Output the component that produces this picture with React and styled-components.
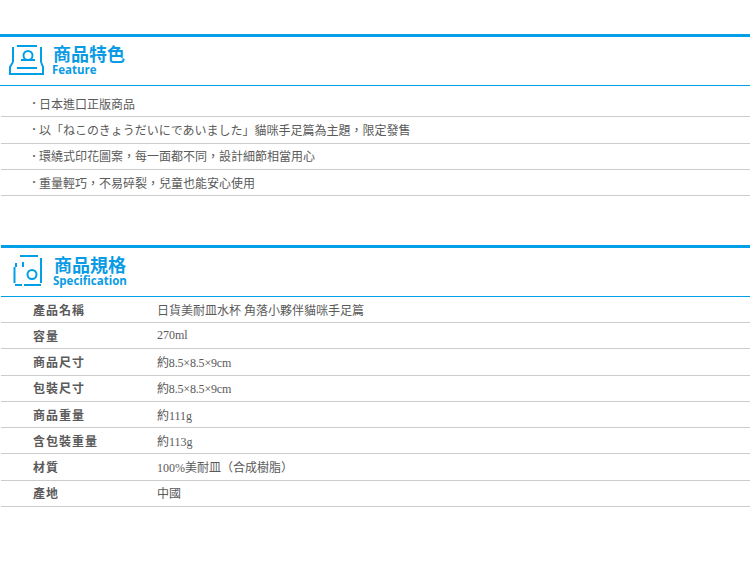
import React from 'react';
import styled, { createGlobalStyle } from 'styled-components';

const GlobalStyle = createGlobalStyle`
  html, body {
    margin: 0;
    padding: 0;
    background: #fff;
  }
`;

const Page = styled.div`
  width: 750px;
  height: 566px;
  padding-top: 34px;
  box-sizing: border-box;
  font-family: "Liberation Serif", "Noto Sans CJK TC", serif;
  font-size: 12px;
  color: #5a5a5a;
  overflow: hidden;
`;

const Section = styled.section`
  margin-bottom: ${(p) => p.$gap || 0}px;
`;

const Header = styled.div`
  box-sizing: border-box;
  height: 52px;
  margin-left: ${(p) => p.$inset || 0}px;
  border-top: 3px solid #009fe8;
  border-bottom: 1px solid #009fe8;
  display: flex;
  align-items: center;
  padding-left: 9px;
  padding-bottom: 2px;
  gap: 7px;
`;

const HeadText = styled.div`
  display: flex;
  flex-direction: column;
  color: #0a9be4;
`;

const HeadTitle = styled.div`
  margin-left: 1px;
  font-family: "Noto Sans CJK TC", sans-serif;
  font-size: 18px;
  font-weight: 700;
  line-height: 20px;
`;

const HeadSub = styled.div`
  font-family: "Open Sans", sans-serif;
  font-size: 11.5px;
  font-weight: 700;
  line-height: 14px;
`;

const List = styled.div`
  padding-top: 5px;
`;

const ListRow = styled.div`
  box-sizing: border-box;
  height: 26.33px;
  margin-left: 1px;
  border-bottom: 1px solid #ccc;
  display: flex;
  align-items: center;
  padding-left: 31px;
`;

const Bullet = styled.span`
  width: 7px;
  font-weight: 700;
`;

const SpecRow = styled.div`
  box-sizing: border-box;
  height: 26.25px;
  margin-left: 1px;
  border-bottom: 1px solid #ccc;
  display: flex;
  align-items: center;
  padding-left: 32px;
`;

const SpecLabel = styled.div`
  width: 124px;
  font-weight: 700;
  letter-spacing: 1px;
`;

const SpecValue = styled.span`
  letter-spacing: ${(p) => (p.$tight ? '-0.17px' : 'normal')};
`;

const features = [
  '日本進口正版商品',
  '以「ねこのきょうだいにであいました」貓咪手足篇為主題\uFF0C限定發售',
  '環繞式印花圖案\uFF0C每一面都不同\uFF0C設計細節相當用心',
  '重量輕巧\uFF0C不易碎裂\uFF0C兒童也能安心使用',
];

const specs = [
  { label: '產品名稱', value: '日貨美耐皿水杯 角落小夥伴貓咪手足篇' },
  { label: '容量', value: '270ml' },
  { label: '商品尺寸', value: '約8.5×8.5×9cm', tight: true },
  { label: '包裝尺寸', value: '約8.5×8.5×9cm', tight: true },
  { label: '商品重量', value: '約111g' },
  { label: '含包裝重量', value: '約113g' },
  { label: '材質', value: '100%美耐皿\uFF08合成樹脂\uFF09' },
  { label: '產地', value: '中國' },
];

const FeatureIcon = () => (
  <svg width="36" height="32" viewBox="0 0 36 32" fill="none" stroke="#009fe8" strokeWidth="2">
    <path d="M8 2H28M4 3V18M32 3V18M12 16H26M8 24H28" />
    <circle cx="19" cy="11.5" r="4.5" />
    <path d="M4 18L1 23V30H34V23L32 18" />
  </svg>
);

const SpecIcon = () => (
  <svg width="36" height="34" viewBox="0 0 36 34" fill="none" stroke="#009fe8" strokeWidth="2">
    <path d="M10 2H28M31 4V29M6 9V13M4.5 13V29M13 8V13M5 31H12M14 31H31" />
    <circle cx="22" cy="20.5" r="4.5" />
  </svg>
);

export default function App() {
  return (
    <Page>
      <GlobalStyle />
      <Section $gap={48.67}>
        <Header>
          <FeatureIcon />
          <HeadText>
            <HeadTitle>商品特色</HeadTitle>
            <HeadSub>Feature</HeadSub>
          </HeadText>
        </Header>
        <List>
          {features.map((text) => (
            <ListRow key={text}>
              <Bullet>·</Bullet>
              <span>{text}</span>
            </ListRow>
          ))}
        </List>
      </Section>
      <Section>
        <Header $inset={1}>
          <SpecIcon />
          <HeadText>
            <HeadTitle>商品規格</HeadTitle>
            <HeadSub>Specification</HeadSub>
          </HeadText>
        </Header>
        {specs.map(({ label, value, tight }) => (
          <SpecRow key={label}>
            <SpecLabel>{label}</SpecLabel>
            <SpecValue $tight={tight}>{value}</SpecValue>
          </SpecRow>
        ))}
      </Section>
    </Page>
  );
}
